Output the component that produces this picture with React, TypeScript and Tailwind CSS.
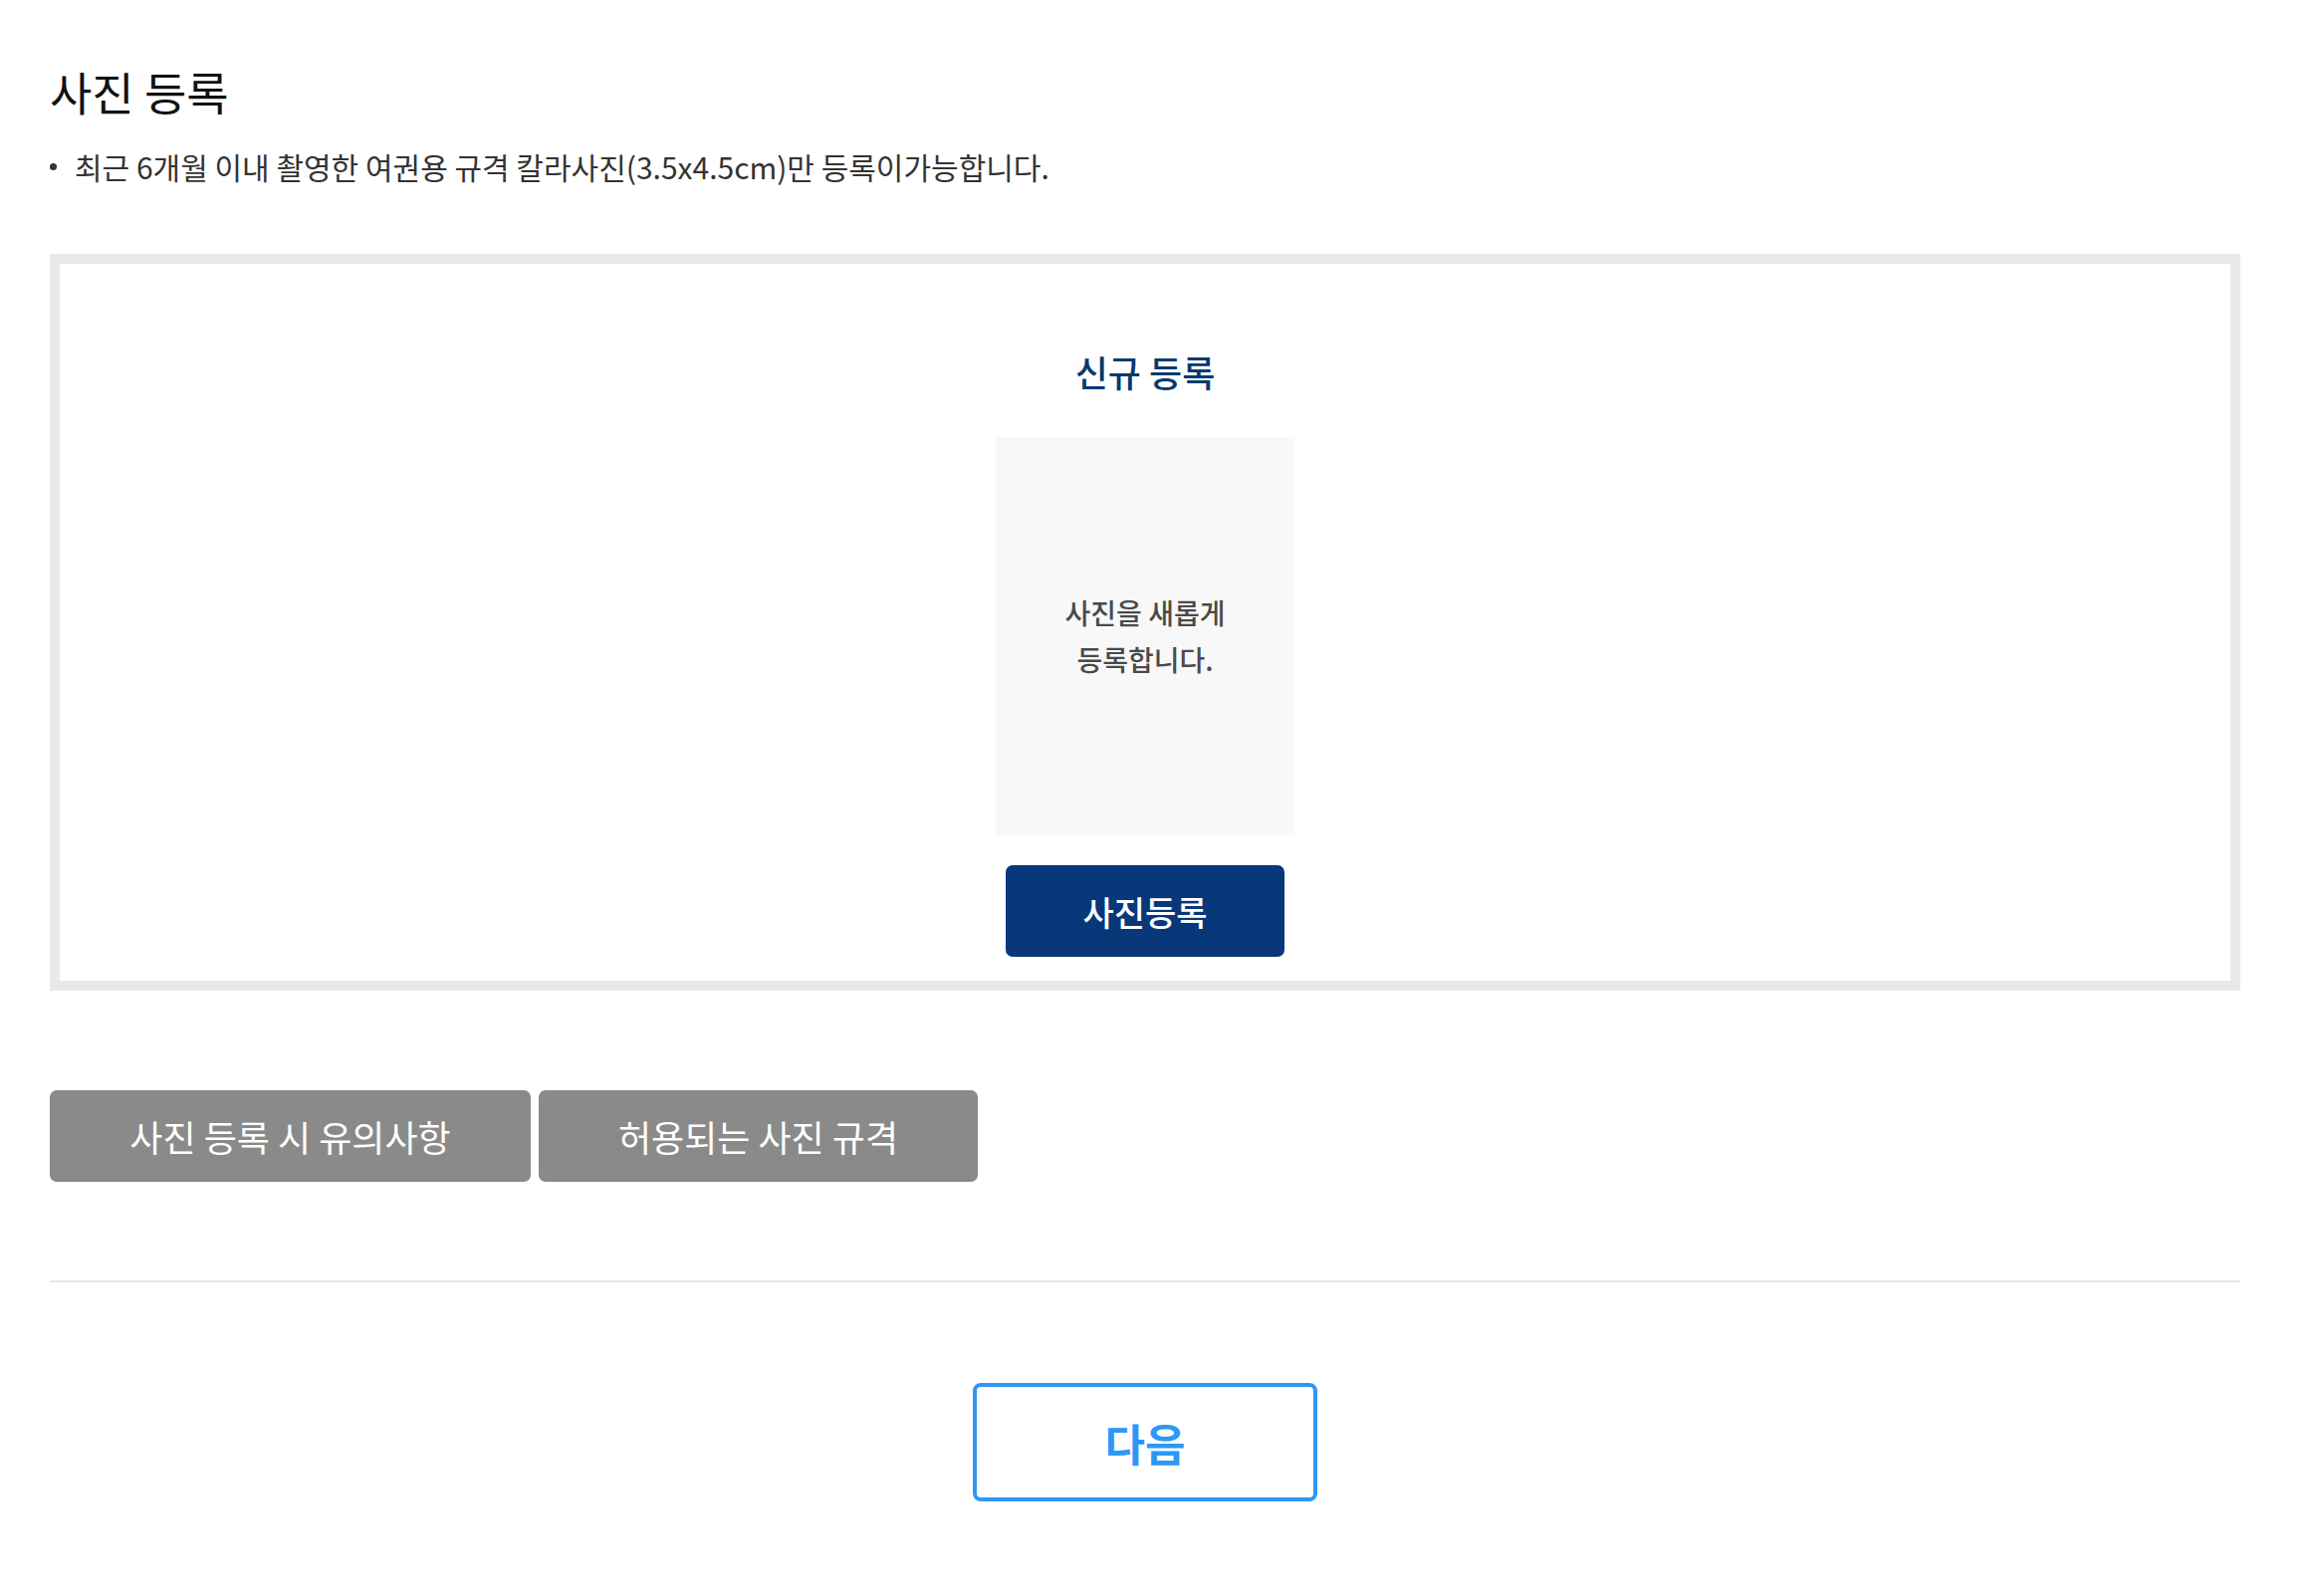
import React from "react";

export default function App() {
  const font = { fontFamily: '"Noto Sans CJK KR", "Noto Sans", sans-serif' };
  return (
    <div className="min-h-[1602px] w-[2334px] bg-white" style={font}>
      <div className="ml-[50px] w-[2200px] flex flex-col">
        <h1 className="mt-[68px] text-[46px] leading-[46px] font-normal text-[#111111]">사진 등록</h1>
        <div className="mt-[38px] flex items-center h-[30px]">
          <span className="w-[7px] h-[7px] rounded-full bg-[#333333]" />
          <span className="ml-[18px] text-[30px] leading-[30px] text-[#333333]">
            최근 6개월 이내 촬영한 여권용 규격 칼라사진(3.5x4.5cm)만 등록이가능합니다.
          </span>
        </div>

        <div className="mt-[73px] h-[740px] border-[10px] border-[#e9e9e9] flex flex-col items-center">
          <div className="mt-[90px] text-[36px] leading-[36px] font-medium text-[#073a6f]">신규 등록</div>
          <div className="mt-[48px] w-[300px] h-[400px] bg-[#f8f8f8] flex items-center justify-center">
            <p className="text-center text-[28px] leading-[47px] font-medium text-[#4a4a4a]">
              사진을 새롭게
              <br />
              등록합니다.
            </p>
          </div>
          <button className="mt-[30px] w-[280px] h-[92px] rounded-[7px] bg-[#08377a] text-white text-[34px] font-medium">
            사진등록
          </button>
        </div>

        <div className="mt-[100px] flex gap-[8px]">
          <button className="w-[483px] h-[92px] rounded-[7px] bg-[#8a8a8a] text-white text-[36px] font-normal">
            사진 등록 시 유의사항
          </button>
          <button className="w-[441px] h-[92px] rounded-[7px] bg-[#8a8a8a] text-white text-[36px] font-normal">
            허용되는 사진 규격
          </button>
        </div>

        <div className="mt-[99px] h-[2px] bg-[#e6e6e6]" />

        <div className="mt-[101px] flex justify-center">
          <button className="w-[346px] h-[119px] rounded-[8px] border-[4px] border-[#2e97f5] bg-white text-[#2e97f5] text-[44px] font-bold">
            다음
          </button>
        </div>
      </div>
    </div>
  );
}
